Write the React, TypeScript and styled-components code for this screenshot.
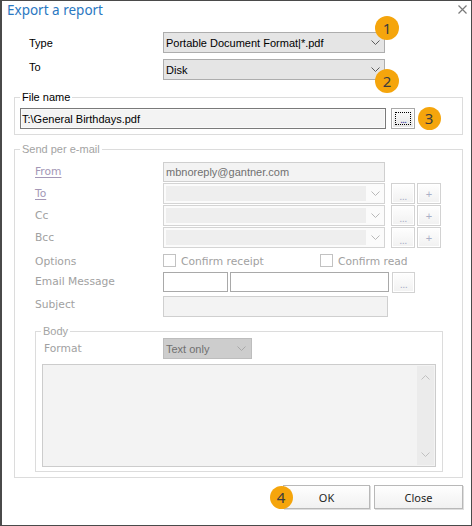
import React from "react"
import styled, { createGlobalStyle } from "styled-components"

const uiFont = `"Liberation Sans", Arial, sans-serif`
const grayFont = `"DejaVu Sans", Verdana, sans-serif`

const GlobalStyle = createGlobalStyle`
  html, body {
    margin: 0;
    padding: 0;
    background: #fff;
  }
  * {
    box-sizing: border-box;
  }
`

const Window = styled.div`
  position: relative;
  width: 472px;
  height: 526px;
  background: #fff;
  border: 1px solid #4a4a4a;
  border-left-width: 2px;
  font-family: ${uiFont};
  font-size: 11px;
  color: #000;
`

const TitleBar = styled.div`
  height: 26px;
  display: flex;
  justify-content: space-between;
  align-items: flex-start;
  padding: 0 4px 0 5px;
`

const Title = styled.div`
  font-family: "Noto Sans", sans-serif;
  font-size: 13.5px;
  line-height: 18px;
  color: #2a78c2;
`

const CloseIcon = styled.svg`
  margin-top: 4px;
`

const Content = styled.div`
  padding: 0 8px 0 12px;
`

const TopGrid = styled.div`
  display: grid;
  grid-template-columns: 134px 222px;
  grid-auto-rows: 21px;
  row-gap: 6px;
  margin-top: 5px;
  padding-left: 15px;
  align-items: center;
`

const TopLabel = styled.div<{ $raise?: number }>`
  line-height: 14px;
  margin-bottom: ${p => (p.$raise ? p.$raise * 2 : 0)}px;
`

const Select = styled.div`
  height: 21px;
  display: flex;
  align-items: center;
  justify-content: space-between;
  padding: 0 4px 0 2px;
  background: #e5e5e5;
  border: 1px solid #adadad;
  white-space: nowrap;
`

const Group = styled.fieldset`
  margin: 0;
  padding: 4px 5px 5px;
  border: 1px solid #dcdcdc;
  min-width: 0;
`

const Legend = styled.legend<{ $muted?: boolean }>`
  padding: 0 2px;
  font-size: 11px;
  line-height: 14px;
  color: ${p => (p.$muted ? "#a3a3a3" : "#000")};
`

const FileGroup = styled(Group)`
  margin-top: 10px;
`

const FileRow = styled.div`
  display: flex;
  gap: 5px;
`

const PathInput = styled.div`
  width: 366px;
  height: 21px;
  display: flex;
  align-items: center;
  padding-left: 1px;
  border: 1px solid #7a7a7a;
  background: #f3f3f3;
  box-shadow: inset 0 0 0 1px #fafafa;
`

const BrowseButton = styled.div`
  width: 24px;
  height: 21px;
  padding: 3px;
  border: 1px solid #a9a9a9;
  background: linear-gradient(#fbfbfb, #e6e6e6);
  box-shadow: inset 0 0 0 1px #fff;
`

const FocusRect = styled.div`
  height: 100%;
  border: 1px dotted #000;
  display: flex;
  align-items: flex-end;
  justify-content: center;
  line-height: 10px;
  color: #3a3aa0;
  letter-spacing: -1px;
`

const EmailGroup = styled(Group)`
  margin-top: 7px;
`

const EmailGrid = styled.div`
  display: grid;
  grid-template-columns: 128px auto;
  grid-template-rows: 20px 21px 21px 21px 22px 20px 24px;
  row-gap: 1px;
  align-items: center;
  margin-top: 2px;
  padding-left: 15px;
`

const MutedLabel = styled.div<{ $link?: boolean }>`
  font-family: ${grayFont};
  font-size: 10.7px;
  line-height: 14px;
  color: ${p => (p.$link ? "#a497b6" : "#a1a1a1")};
  text-decoration: ${p => (p.$link ? "underline" : "none")};
  text-underline-offset: 2px;
`

const OptionLabel = styled(MutedLabel)`
  margin-top: 3px;
`

const Field = styled.div<{ $end?: boolean }>`
  display: flex;
  align-items: center;
  align-self: ${p => (p.$end ? "end" : "center")};
`

const DisabledInput = styled.div<{ $w: number; $h?: number }>`
  width: ${p => p.$w}px;
  height: ${p => p.$h ?? 21}px;
  display: flex;
  align-items: center;
  padding-left: 2px;
  border: 1px solid #cfcfcf;
  background: #f3f3f3;
  color: #707070;
  font-size: 11px;
`

const WhiteBox = styled.div<{ $w: number; $gap?: number }>`
  width: ${p => p.$w}px;
  height: 20px;
  margin-left: ${p => p.$gap ?? 0}px;
  border: 1px solid #a9a9a9;
  background: #fff;
`

const Combo = styled.div`
  width: 222px;
  height: 21px;
  display: flex;
  padding: 2px 0 2px 2px;
  border: 1px solid #d4d4d4;
  background: #fbfbfb;
`

const ComboFill = styled.div`
  width: 200px;
  background: #eeeeee;
`

const ComboArrow = styled.div`
  flex: 1;
  display: flex;
  align-items: center;
  justify-content: center;
`

const SmallButton = styled.div<{ $gap: number; $w?: number }>`
  width: ${p => p.$w ?? 24}px;
  height: 21px;
  margin-left: ${p => p.$gap}px;
  display: flex;
  align-items: center;
  justify-content: center;
  border: 1px solid #d2d2d2;
  background: linear-gradient(#fefefe, #f1f1f1);
  box-shadow: inset 0 0 0 1px #fff;
  color: #aab0c8;
  font-size: 11px;
`

const Dots = styled.span`
  letter-spacing: -0.5px;
  transform: translateY(2px);
`

const CheckItem = styled.div<{ $w?: number }>`
  width: ${p => (p.$w ? `${p.$w}px` : "auto")};
  display: flex;
  align-items: center;
  gap: 5px;
`

const CheckBox = styled.div`
  width: 13px;
  height: 13px;
  border: 1px solid #c2c2c2;
  background: #fff;
`

const BodyGroup = styled(Group)`
  width: 408px;
  margin: 7px 0 0 15px;
  padding: 0 6px 4px 5px;
`

const FormatRow = styled.div`
  display: flex;
  align-items: center;
  height: 21px;
`

const FormatLabel = styled(MutedLabel)`
  width: 119px;
  margin-left: 3px;
`

const FormatSelect = styled(Select)`
  width: 89px;
  background: #cdcdcd;
  border-color: #bdbdbd;
  color: #707070;
  padding-right: 5px;
`

const TextArea = styled.div`
  width: 394px;
  height: 103px;
  margin: 5px 0 0 1px;
  display: flex;
  justify-content: flex-end;
  padding: 1px 1px 1px 0;
  border: 1px solid #cccccc;
  background: #f3f3f3;
`

const ScrollBar = styled.div`
  width: 17px;
  display: flex;
  flex-direction: column;
  justify-content: space-between;
  align-items: center;
  padding: 9px 0 8px;
  background: #ebebeb;
`

const ButtonRow = styled.div`
  display: flex;
  justify-content: flex-end;
  gap: 4px;
  margin-top: 7px;
`

const PushButton = styled.div<{ $w: number }>`
  width: ${p => p.$w}px;
  height: 24px;
  display: flex;
  align-items: center;
  justify-content: center;
  border: 1px solid #b8b8b8;
  background: linear-gradient(#fefefe, #f1f1f1);
  box-shadow: 1px 1px 0 #dedede;
  font-family: "Noto Sans", sans-serif;
  font-size: 11px;
  color: #1e1e1e;
`

// numbered callouts laid over the dialog (x / y = centre in page pixels)
const Badge = styled.div<{ $x: number; $y: number; $d?: number }>`
  position: absolute;
  left: ${p => p.$x - (p.$d ?? 24) / 2 - 2}px;
  top: ${p => p.$y - (p.$d ?? 24) / 2 - 1}px;
  width: ${p => p.$d ?? 24}px;
  height: ${p => p.$d ?? 24}px;
  border-radius: 50%;
  background: #f5a50c;
  color: #3c3c3c;
  font-family: "Noto Sans", sans-serif;
  font-size: 15px;
  display: flex;
  align-items: center;
  justify-content: center;
`

const Chevron = ({ color = "#5c5c5c", up = false }: { color?: string; up?: boolean }) => (
  <svg width="9" height="5" viewBox="0 0 9 5">
    <polyline
      points={up ? "0.5,4.5 4.5,0.5 8.5,4.5" : "0.5,0.5 4.5,4.5 8.5,0.5"}
      fill="none"
      stroke={color}
      strokeWidth="1"
    />
  </svg>
)

const DisabledCombo = () => (
  <Combo>
    <ComboFill />
    <ComboArrow>
      <Chevron color="#b9b9b9" />
    </ComboArrow>
  </Combo>
)

const ComboRow = () => (
  <Field>
    <DisabledCombo />
    <SmallButton $gap={6}>
      <Dots>...</Dots>
    </SmallButton>
    <SmallButton $gap={2}>+</SmallButton>
  </Field>
)

export default function App() {
  return (
    <>
      <GlobalStyle />
      <Window>
        <TitleBar>
          <Title>Export a report</Title>
          <CloseIcon width="9" height="9" viewBox="0 0 9 9">
            <path d="M0.5 0.5 L8.5 8.5 M8.5 0.5 L0.5 8.5" stroke="#7a7a7a" strokeWidth="1.2" />
          </CloseIcon>
        </TitleBar>

        <Content>
          <TopGrid>
            <TopLabel>Type</TopLabel>
            <Select>
              <span>Portable Document Format|*.pdf</span>
              <Chevron />
            </Select>
            <TopLabel $raise={3}>To</TopLabel>
            <Select>
              <span>Disk</span>
              <Chevron />
            </Select>
          </TopGrid>

          <FileGroup>
            <Legend>File name</Legend>
            <FileRow>
              <PathInput>{"T:\\General Birthdays.pdf"}</PathInput>
              <BrowseButton>
                <FocusRect>...</FocusRect>
              </BrowseButton>
            </FileRow>
          </FileGroup>

          <EmailGroup>
            <Legend $muted>Send per e-mail</Legend>
            <EmailGrid>
              <MutedLabel $link>From</MutedLabel>
              <Field>
                <DisabledInput $w={222} $h={20}>mbnoreply@gantner.com</DisabledInput>
              </Field>

              <MutedLabel $link>To</MutedLabel>
              <ComboRow />

              <MutedLabel>Cc</MutedLabel>
              <ComboRow />

              <MutedLabel>Bcc</MutedLabel>
              <ComboRow />

              <OptionLabel>Options</OptionLabel>
              <Field>
                <CheckItem $w={157}>
                  <CheckBox />
                  <OptionLabel>Confirm receipt</OptionLabel>
                </CheckItem>
                <CheckItem>
                  <CheckBox />
                  <OptionLabel>Confirm read</OptionLabel>
                </CheckItem>
              </Field>

              <MutedLabel>Email Message</MutedLabel>
              <Field>
                <WhiteBox $w={65} />
                <WhiteBox $w={159} $gap={2} />
                <SmallButton $gap={3} $w={23}>
                  <Dots>...</Dots>
                </SmallButton>
              </Field>

              <MutedLabel>Subject</MutedLabel>
              <Field $end>
                <DisabledInput $w={225} />
              </Field>
            </EmailGrid>

            <BodyGroup>
              <Legend $muted>Body</Legend>
              <FormatRow>
                <FormatLabel>Format</FormatLabel>
                <FormatSelect>
                  <span>Text only</span>
                  <Chevron color="#a8a8a8" />
                </FormatSelect>
              </FormatRow>
              <TextArea>
                <ScrollBar>
                  <Chevron color="#c0c0c0" up />
                  <Chevron color="#c0c0c0" />
                </ScrollBar>
              </TextArea>
            </BodyGroup>
          </EmailGroup>

          <ButtonRow>
            <PushButton $w={87}>OK</PushButton>
            <PushButton $w={89}>Close</PushButton>
          </ButtonRow>
        </Content>

        <Badge $x={387} $y={28}>1</Badge>
        <Badge $x={387} $y={81}>2</Badge>
        <Badge $x={429} $y={118} $d={23}>3</Badge>
        <Badge $x={281} $y={497} $d={23}>4</Badge>
      </Window>
    </>
  )
}
